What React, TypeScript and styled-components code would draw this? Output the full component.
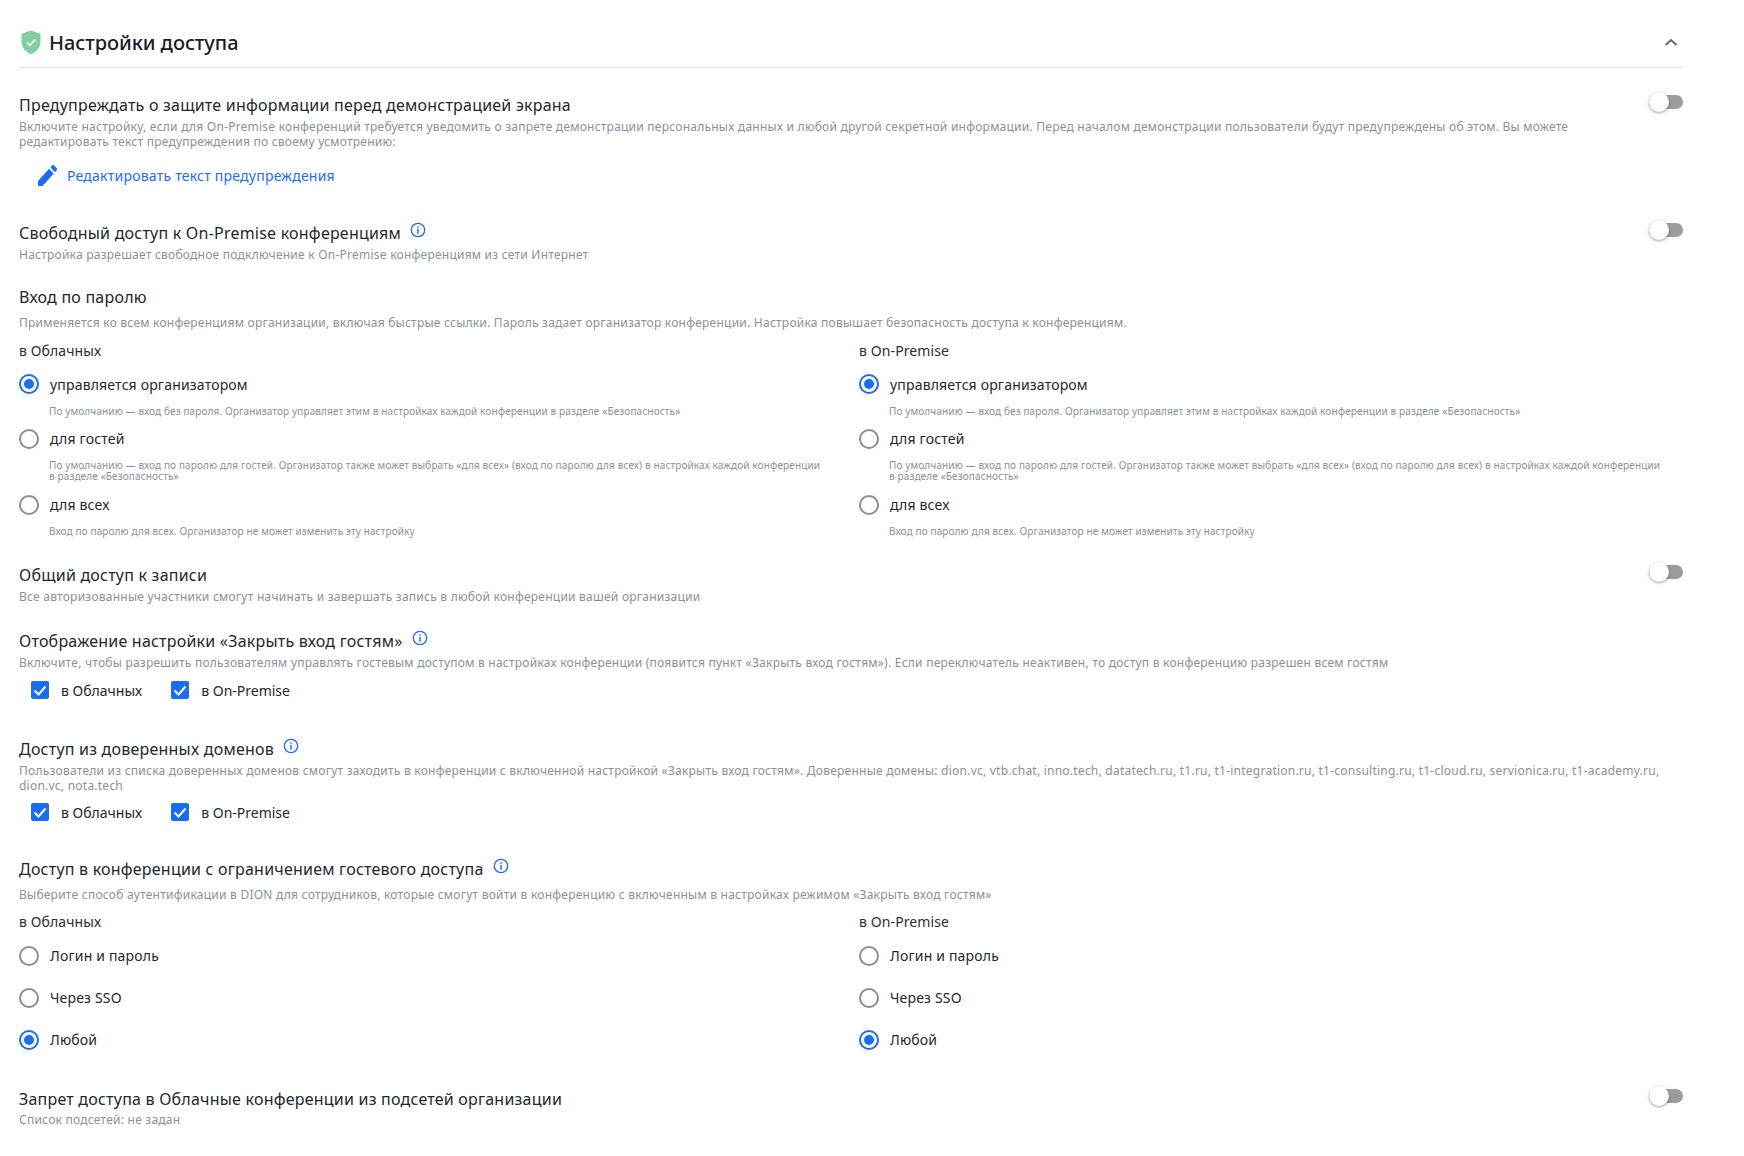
import React from "react";
import styled, { createGlobalStyle } from "styled-components";

const Global = createGlobalStyle`
  html, body { margin: 0; padding: 0; background: #fff; }
  body { font-family: "Noto Sans", "Open Sans", sans-serif; color: #1f2226; }
`;

const Page = styled.div`
  width: 1744px;
  height: 1156px;
  overflow: hidden;
  box-sizing: border-box;
  padding: 0 61px 0 19px;
`;

const Header = styled.header`
  border-bottom: 1px solid #dfe1e4;
  display: flex;
  align-items: center;
  padding: 18px 0 0 2px;
  height: 49px;
  gap: 8px;
`;

const HeaderTitle = styled.h2`
  margin: 0;
  flex: 1;
  font-size: 20px;
  line-height: 28px;
  font-weight: 500;
  letter-spacing: -0.05px;
  color: #1a1c1f;
`;

const Section = styled.section<{ $top: number }>`
  margin-top: ${(p) => p.$top}px;
  position: relative;
`;

const TitleRow = styled.div`
  display: flex;
  align-items: flex-start;
  gap: 9px;
  height: 22px;
`;

const Title = styled.div`
  font-size: 16px;
  line-height: 22px;
  letter-spacing: 0.22px;
  color: #24272b;
`;

const Desc = styled.p<{ $top?: number; $max?: number }>`
  margin: ${(p) => p.$top ?? 4}px 0 0;
  max-width: ${(p) => p.$max ?? 1664}px;
  font-size: 12px;
  line-height: 14.5px;
  letter-spacing: 0.235px;
  color: #8b9097;
`;

const ToggleBox = styled.span`
  position: absolute;
  right: 0;
  top: 1px;
  width: 34px;
  height: 14px;
  border-radius: 7px;
  background: #9c9c9c;
`;

const Knob = styled.span`
  position: absolute;
  left: 0;
  top: -3px;
  width: 20px;
  height: 20px;
  border-radius: 50%;
  background: #fff;
  box-shadow: 0 1px 3px rgba(0, 0, 0, 0.4);
`;

const LinkRow = styled.a`
  display: flex;
  align-items: center;
  gap: 10px;
  margin: 15px 0 0 19px;
  height: 22px;
  font-size: 14px;
  letter-spacing: 0.23px;
  color: #1a6cf0;
`;

const Columns = styled.div<{ $top: number }>`
  display: grid;
  grid-template-columns: 826px 824px;
  column-gap: 14px;
  margin-top: ${(p) => p.$top}px;
`;

const ColLabel = styled.div`
  font-size: 14px;
  line-height: 20px;
  letter-spacing: 0.1px;
  color: #2b2e33;
`;

const RadioRow = styled.div<{ $top: number }>`
  display: flex;
  align-items: center;
  gap: 11px;
  height: 22px;
  margin-top: ${(p) => p.$top}px;
  font-size: 14px;
  letter-spacing: 0.18px;
  color: #24272b;
`;

const RadioCircle = styled.span<{ $on?: boolean }>`
  width: 20px;
  height: 20px;
  box-sizing: border-box;
  flex: none;
  border-radius: 50%;
  border: 2px solid ${(p) => (p.$on ? "#1a6cf0" : "#8a8d92")};
  display: flex;
  align-items: center;
  justify-content: center;
  &::after {
    content: "";
    display: ${(p) => (p.$on ? "block" : "none")};
    width: 10px;
    height: 10px;
    border-radius: 50%;
    background: #1a6cf0;
  }
`;

const Hint = styled.div<{ $top: number }>`
  margin: ${(p) => p.$top}px 0 0 30px;
  max-width: 775px;
  font-size: 10px;
  line-height: 11.5px;
  letter-spacing: 0.13px;
  color: #8b9097;
`;

const Checks = styled.div<{ $top: number }>`
  display: flex;
  gap: 29px;
  margin: ${(p) => p.$top}px 0 0 12px;
`;

const CheckItem = styled.label`
  display: flex;
  align-items: center;
  gap: 12px;
  height: 22px;
  font-size: 14px;
  color: #24272b;
`;

const CheckBox = styled.span`
  width: 18px;
  height: 18px;
  border-radius: 2px;
  background: #1a6cf0;
  display: flex;
  align-items: center;
  justify-content: center;
`;

const ChevronWrap = styled.span`
  display: inline-flex;
  margin-right: 5px;
`;

const Shield = () => (
  <svg width="20" height="25" viewBox="0 0 20 25">
    <path d="M10 .5l9.500 3.200v8c0 5.500-4 10-9.500 12.600C4.500 21.700.5 17.200.5 11.700v-8z" fill="#7fcf9f" />
    <path d="M5.800 12.300l3 3 5.500-5.800" fill="none" stroke="#fff" strokeWidth="1.800" />
  </svg>
);

const Chevron = () => (
  <ChevronWrap>
    <svg width="14" height="9" viewBox="0 0 14 9">
      <path d="M1.500 7l5.500-5 5.500 5" fill="none" stroke="#666a70" strokeWidth="2" />
    </svg>
  </ChevronWrap>
);

const Pencil = () => (
  <svg width="19" height="21" viewBox="0 0 18 19" preserveAspectRatio="none">
    <path d="M0 19v-4.500L10.500 3.500l4.300 4.500L4.300 19zM11.800 2.200L13.500.400c.5-.5 1.200-.5 1.700 0l2.500 2.600c.5.5.5 1.200 0 1.700l-1.700 1.800z" fill="#1a6cf0" />
  </svg>
);

const InfoWrap = styled.span`
  display: inline-flex;
  height: 16px;
`;

const Info = () => (
  <InfoWrap>
    <svg width="16" height="16" viewBox="0 0 16 16">
      <circle cx="8" cy="8" r="6.700" fill="none" stroke="#1a6cf0" strokeWidth="1.300" />
      <rect x="7.300" y="7" width="1.400" height="4.800" fill="#1a6cf0" />
      <rect x="7.300" y="4.300" width="1.400" height="1.500" fill="#1a6cf0" />
    </svg>
  </InfoWrap>
);

const Toggle = () => (
  <ToggleBox>
    <Knob />
  </ToggleBox>
);

const Tick = () => (
  <svg width="14" height="11" viewBox="0 0 14 11">
    <path d="M1.500 5.500l4 4 7-8" fill="none" stroke="#fff" strokeWidth="2" />
  </svg>
);

const Check = ({ label }: { label: string }) => (
  <CheckItem>
    <CheckBox>
      <Tick />
    </CheckBox>
    {label}
  </CheckItem>
);

const H1 = "По умолчанию — вход без пароля. Организатор управляет этим в настройках каждой конференции в разделе «Безопасность»";
const H2 = "По умолчанию — вход по паролю для гостей. Организатор также может выбрать «для всех» (вход по паролю для всех) в настройках каждой конференции в разделе «Безопасность»";
const H3 = "Вход по паролю для всех. Организатор не может изменить эту настройку";

const PasswordCol = ({ label }: { label: string }) => (
  <div>
    <ColLabel>{label}</ColLabel>
    <RadioRow $top={12}>
      <RadioCircle $on />
      управляется организатором
    </RadioRow>
    <Hint $top={11}>{H1}</Hint>
    <RadioRow $top={10}>
      <RadioCircle />
      для гостей
    </RadioRow>
    <Hint $top={10}>{H2}</Hint>
    <RadioRow $top={11}>
      <RadioCircle />
      для всех
    </RadioRow>
    <Hint $top={10}>{H3}</Hint>
  </div>
);

const AuthCol = ({ label }: { label: string }) => (
  <div>
    <ColLabel>{label}</ColLabel>
    <RadioRow $top={13}>
      <RadioCircle />
      Логин и пароль
    </RadioRow>
    <RadioRow $top={20}>
      <RadioCircle />
      Через SSO
    </RadioRow>
    <RadioRow $top={20}>
      <RadioCircle $on />
      Любой
    </RadioRow>
  </div>
);

export default function App() {
  return (
    <Page>
      <Global />
      <Header>
        <Shield />
        <HeaderTitle>Настройки доступа</HeaderTitle>
        <Chevron />
      </Header>

      <Section $top={26}>
        <Title>Предупреждать о защите информации перед демонстрацией экрана</Title>
        <Toggle />
        <Desc $max={1640}>
          Включите настройку, если для On-Premise конференций требуется уведомить о запрете демонстрации персональных данных и любой другой секретной информации. Перед началом демонстрации пользователи будут предупреждены об этом. Вы можете редактировать текст предупреждения по своему усмотрению:
        </Desc>
        <LinkRow>
          <Pencil />
          Редактировать текст предупреждения
        </LinkRow>
      </Section>

      <Section $top={36}>
        <TitleRow>
          <Title>Свободный доступ к On-Premise конференциям</Title>
          <Info />
        </TitleRow>
        <Toggle />
        <Desc>Настройка разрешает свободное подключение к On-Premise конференциям из сети Интернет</Desc>
      </Section>

      <Section $top={23}>
        <Title>Вход по паролю</Title>
        <Desc $top={8}>
          Применяется ко всем конференциям организации, включая быстрые ссылки. Пароль задает организатор конференции. Настройка повышает безопасность доступа к конференциям.
        </Desc>
        <Columns $top={11}>
          <PasswordCol label="в Облачных" />
          <PasswordCol label="в On-Premise" />
        </Columns>
      </Section>

      <Section $top={27}>
        <Title>Общий доступ к записи</Title>
        <Toggle />
        <Desc>Все авторизованные участники смогут начинать и завершать запись в любой конференции вашей организации</Desc>
      </Section>

      <Section $top={25}>
        <TitleRow>
          <Title>Отображение настройки «Закрыть вход гостям»</Title>
          <Info />
        </TitleRow>
        <Desc>
          Включите, чтобы разрешить пользователям управлять гостевым доступом в настройках конференции (появится пункт «Закрыть вход гостям»). Если переключатель неактивен, то доступ в конференцию разрешен всем гостям
        </Desc>
        <Checks $top={9}>
          <Check label="в Облачных" />
          <Check label="в On-Premise" />
        </Checks>
      </Section>

      <Section $top={37}>
        <TitleRow>
          <Title>Доступ из доверенных доменов</Title>
          <Info />
        </TitleRow>
        <Desc>
          Пользователи из списка доверенных доменов смогут заходить в конференции с включенной настройкой «Закрыть вход гостям». Доверенные домены: dion.vc, vtb.chat, inno.tech, datatech.ru, t1.ru, t1-integration.ru, t1-consulting.ru, t1-cloud.ru, servionica.ru, t1-academy.ru, dion.vc, nota.tech
        </Desc>
        <Checks $top={8}>
          <Check label="в Облачных" />
          <Check label="в On-Premise" />
        </Checks>
      </Section>

      <Section $top={35}>
        <TitleRow>
          <Title>Доступ в конференции с ограничением гостевого доступа</Title>
          <Info />
        </TitleRow>
        <Desc $top={8}>
          Выберите способ аутентификации в DION для сотрудников, которые смогут войти в конференцию с включенным в настройках режимом «Закрыть вход гостям»
        </Desc>
        <Columns $top={9}>
          <AuthCol label="в Облачных" />
          <AuthCol label="в On-Premise" />
        </Columns>
      </Section>

      <Section $top={37}>
        <Title>Запрет доступа в Облачные конференции из подсетей организации</Title>
        <Toggle />
        <Desc $top={3}>Список подсетей: не задан</Desc>
      </Section>
    </Page>
  );
}
